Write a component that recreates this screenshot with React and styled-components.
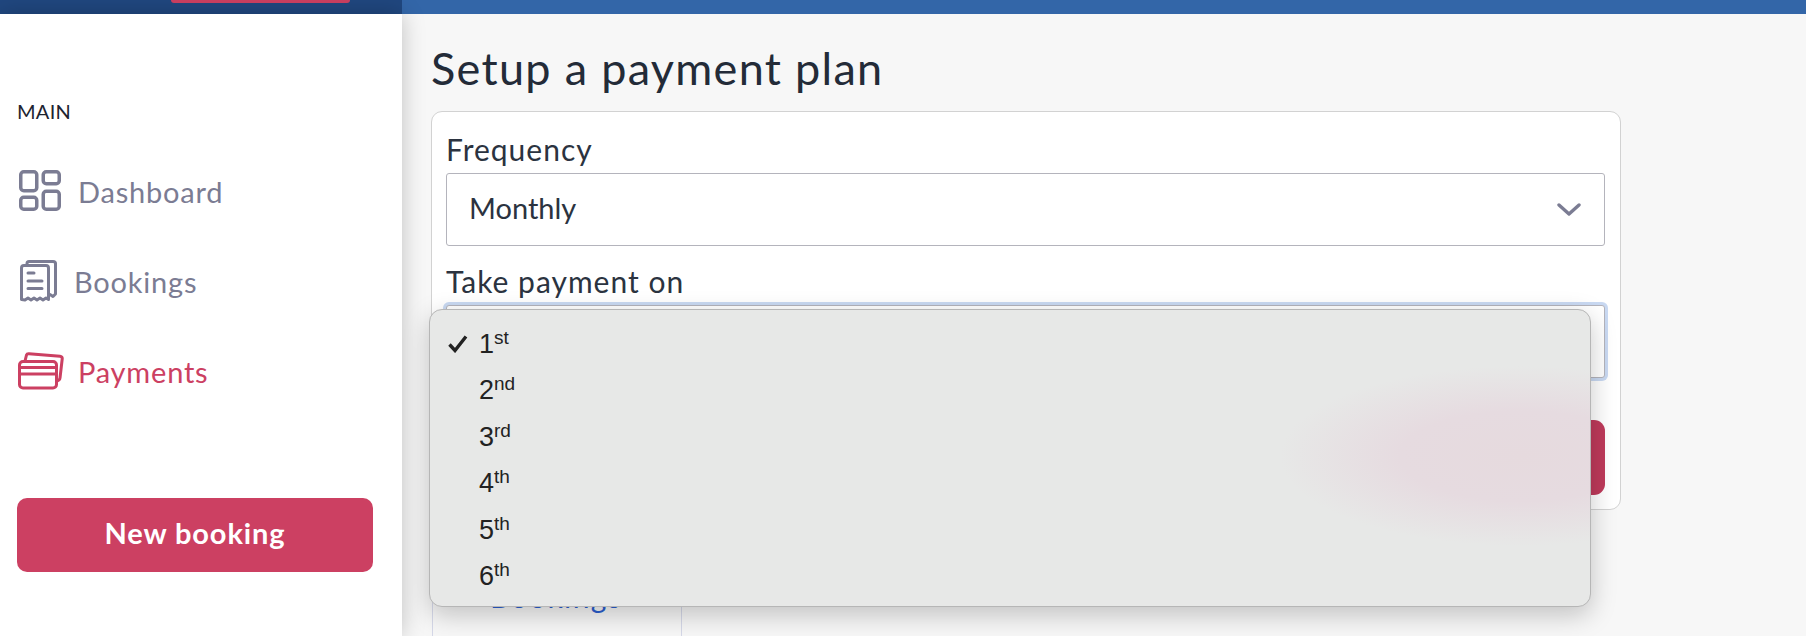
import React from 'react';
import styled, { createGlobalStyle } from 'styled-components';

const GlobalStyle = createGlobalStyle`
html, body {
  margin: 0;
  padding: 0;
  background: #f7f7f7;
  font-family: "Lato", "Open Sans", sans-serif;
}
* { box-sizing: border-box; }
`;

const Page = styled.div`
width: 1806px;
height: 636px;
overflow: hidden;
display: flex;
flex-direction: column;
`;

const TopBar = styled.div`
height: 14px;
flex: none;
display: flex;
background: #3366a8;
`;

const Brand = styled.div`
width: 402px;
background: #20477f;
padding-left: 171px;
`;

const BrandTab = styled.div`
width: 179px;
height: 3px;
background: #cc4062;
border-radius: 0 0 3px 3px;
`;

const Body = styled.div`
flex: 1;
display: flex;
min-height: 0;
`;

const Sidebar = styled.div`
width: 402px;
flex: none;
background: #fff;
box-shadow: 0 0 22px rgba(0, 0, 0, 0.22);
padding: 84px 29px 0 17px;
position: relative;
z-index: 1;
`;

const SectionTitle = styled.div`
font-size: 20px;
letter-spacing: 0.3px;
line-height: 26px;
color: #1d2430;
margin-bottom: 22px;
`;

const NavItem = styled.div`
height: 90px;
display: flex;
align-items: center;
gap: ${(props) => props.$gap}px;
padding-left: ${(props) => props.$inset}px;
font-size: 29px;
letter-spacing: 0.8px;
color: ${(props) => (props.$active ? '#cc4062' : '#7b7c93')};
`;

const NewBooking = styled.button`
display: block;
width: 356px;
height: 74px;
margin-top: 82px;
padding: 0 0 6px;
border: 0;
border-radius: 10px;
background: #cc4062;
color: #fff;
font-family: inherit;
font-size: 29px;
letter-spacing: 0.9px;
font-weight: 700;
`;

const Main = styled.div`
flex: 1;
padding: 28px 0 0 29px;
`;

const Title = styled.h1`
margin: 0 0 17px;
font-size: 45px;
letter-spacing: 1.3px;
line-height: 52px;
font-weight: 400;
color: #232b38;
`;

const Card = styled.div`
width: 1190px;
height: 399px;
background: #fff;
border: 1px solid #d2d2d2;
border-radius: 11px;
padding: 17px 15px 0 14px;
`;

const Label = styled.div`
font-size: 30px;
letter-spacing: 1px;
line-height: 40px;
margin-bottom: 4px;
color: #2b3340;
`;

const Select = styled.div`
height: 73px;
margin-bottom: ${(props) => (props.$focused ? 42 : 15)}px;
margin-top: 1px;
display: flex;
align-items: center;
justify-content: space-between;
padding: 0 23px 0 22px;
background: #fff;
border: 1px solid #b4b4bc;
border-radius: 3px;
font-size: 29px;
color: #2b3340;
position: relative;
box-shadow: ${(props) => (props.$focused ? '0 0 0 3px #c9d9f2' : 'none')};
`;

const SelectValue = styled.span`
margin-bottom: 4px;
`;

const SaveButton = styled.div`
height: 75px;
border-radius: 11px;
background: #bf3a5b;
`;

const Menu = styled.div`
position: absolute;
left: -18px;
top: 3px;
width: 1162px;
height: 298px;
z-index: 2;
overflow: hidden;
background: #e7e8e7;
border: 1px solid #b6b6b6;
border-radius: 13px;
box-shadow: 0 8px 26px rgba(0, 0, 0, 0.22);
padding-top: 11px;
font-family: "Liberation Sans", Arial, sans-serif;
color: #222;
`;

const MenuGlow = styled.div`
position: absolute;
left: 850px;
top: 56px;
width: 480px;
height: 180px;
border-radius: 50%;
background: radial-gradient(closest-side, #e6dade 0%, #e6dbe0 50%, rgba(231, 232, 231, 0) 100%);
`;

const MenuItem = styled.div`
height: 46.5px;
display: flex;
align-items: center;
position: relative;
padding-left: 18px;
font-size: 27px;
`;

const CheckSlot = styled.span`
width: 31px;
display: flex;
align-items: center;
`;

const Ordinal = styled.span`
font-size: 19px;
line-height: 1;
position: relative;
top: -7px;
`;

const SidePanel = styled.div`
width: 250px;
height: 120px;
margin: 29px 0 0 1px;
padding: 39px 0 0 57px;
background: #f7f7f7;
border-left: 1px solid #d5d8e8;
border-right: 1px solid #d5d8e8;
font-size: 30px;
letter-spacing: 1.4px;
line-height: 36px;
color: #2b5fd0;
`;

const DashboardIcon = () => (
  <svg width="42" height="42" viewBox="0 0 42 42" fill="none" stroke="currentColor" strokeWidth="3.5">
    <rect x="1.75" y="1.75" width="16" height="19" rx="3" />
    <rect x="24.25" y="1.75" width="16" height="12" rx="3" />
    <rect x="1.75" y="27.25" width="16" height="12" rx="3" />
    <rect x="24.25" y="21.25" width="16" height="18" rx="3" />
  </svg>
);

const BookingsIcon = () => (
  <svg width="37" height="42" viewBox="0 0 37 42" fill="none" stroke="currentColor" strokeWidth="3" strokeLinecap="round" strokeLinejoin="round">
    <path d="M7 5 V3.5 Q7 1.5 9 1.5 H33 Q35.5 1.5 35.5 3.5 V34 L33 36.5 L30 34.5" />
    <path d="M1.5 39.5 V8 Q1.5 5.5 4 5.5 H26 Q28.5 5.5 28.5 8 V39.5 L26 38 L23 40 L20 38 L17 40 L14 38 L11 40 L8 38 L5 40 Z" />
    <path d="M8 13 H14 M8 21 H22 M8 28.5 H22" />
  </svg>
);

const PaymentsIcon = () => (
  <svg width="46" height="38" viewBox="0 0 46 38" fill="none" stroke="currentColor" strokeWidth="3" strokeLinejoin="round">
    <path d="M7 9 L8.5 3 Q9 1.5 11 1.7 L42 4.2 Q44.5 4.5 44.2 7 L42 26 Q41.8 28.5 38 29.5" />
    <rect x="1.5" y="9.5" width="37" height="26.5" rx="3.5" />
    <path d="M1.5 15.5 H38.5 M1.5 22 H38.5" />
  </svg>
);

const Chevron = () => (
  <svg width="24" height="14" viewBox="0 0 24 14" fill="none" stroke="#7b7c93" strokeWidth="3.4" strokeLinecap="round" strokeLinejoin="round">
    <path d="M2 2 L12 11 L22 2" />
  </svg>
);

const Check = () => (
  <svg width="20" height="18" viewBox="0 0 20 18" fill="none" stroke="#222" strokeWidth="3.4">
    <path d="M1.5 9.5 L7 15.5 L18 1.5" />
  </svg>
);

const days = [
  ['1', 'st'],
  ['2', 'nd'],
  ['3', 'rd'],
  ['4', 'th'],
  ['5', 'th'],
  ['6', 'th'],
];

export default function App() {
  return (
    <Page>
      <GlobalStyle />
      <TopBar>
        <Brand>
          <BrandTab />
        </Brand>
      </TopBar>
      <Body>
        <Sidebar>
          <SectionTitle>MAIN</SectionTitle>
          <NavItem $inset={2} $gap={17}>
            <DashboardIcon />
            Dashboard
          </NavItem>
          <NavItem $inset={3} $gap={17}>
            <BookingsIcon />
            Bookings
          </NavItem>
          <NavItem $inset={1} $gap={14} $active>
            <PaymentsIcon />
            Payments
          </NavItem>
          <NewBooking>New booking</NewBooking>
        </Sidebar>
        <Main>
          <Title>Setup a payment plan</Title>
          <Card>
            <Label>Frequency</Label>
            <Select>
              <SelectValue>Monthly</SelectValue>
              <Chevron />
            </Select>
            <Label>Take payment on</Label>
            <Select $focused>
              <Menu>
                <MenuGlow />
                {days.map(([num, suffix], i) => (
                  <MenuItem key={num}>
                    <CheckSlot>{i === 0 && <Check />}</CheckSlot>
                    {num}
                    <Ordinal>{suffix}</Ordinal>
                  </MenuItem>
                ))}
              </Menu>
            </Select>
            <SaveButton />
          </Card>
          <SidePanel>Bookings</SidePanel>
        </Main>
      </Body>
    </Page>
  );
}
